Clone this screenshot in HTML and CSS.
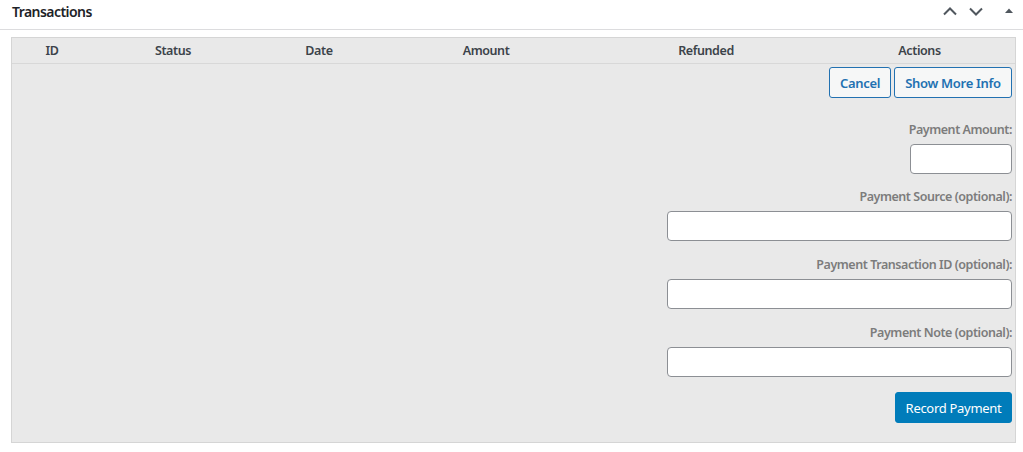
FILE: index.html
```html
<!DOCTYPE html>
<html>
<head>
<meta charset="utf-8">
<link rel="stylesheet" href="styles.css">
</head>
<body>
<div class="postbox">
  <div class="postbox-header">
    <h2 class="title">Transactions</h2>
    <div class="handles">
      <svg class="ico chev" width="16" height="10" viewBox="0 0 16 10"><path d="M2 8.5 L8 2.5 L14 8.5" fill="none" stroke="#50575e" stroke-width="2"/></svg>
      <svg class="ico chev" width="16" height="10" viewBox="0 0 16 10"><path d="M2 2.5 L8 8.5 L14 2.5" fill="none" stroke="#50575e" stroke-width="2"/></svg>
      <svg class="ico tri" width="10" height="10" viewBox="0 0 10 10"><path d="M1 7 L5 2.5 L9 7 Z" fill="#50575e"/></svg>
    </div>
  </div>
  <div class="inside">
    <div class="table">
      <div class="thead">
        <div class="th c1">ID</div>
        <div class="th c2">Status</div>
        <div class="th c3">Date</div>
        <div class="th c4">Amount</div>
        <div class="th c5">Refunded</div>
        <div class="th c6">Actions</div>
      </div>
      <div class="tbody">
        <div class="actions">
          <button class="btn">Cancel</button>
          <button class="btn">Show More Info</button>
        </div>
        <div class="field first">
          <label>Payment Amount:</label>
          <input type="text" class="input small">
        </div>
        <div class="field second">
          <label>Payment Source (optional):</label>
          <input type="text" class="input wide">
        </div>
        <div class="field">
          <label>Payment Transaction ID (optional):</label>
          <input type="text" class="input wide">
        </div>
        <div class="field">
          <label>Payment Note (optional):</label>
          <input type="text" class="input wide">
        </div>
        <button class="btn primary">Record Payment</button>
      </div>
    </div>
  </div>
</div>
</body>
</html>
```
FILE: styles.css
```css
* { box-sizing: border-box; }
body {
  margin: 0;
  background: #fff;
  font-family: "Noto Sans", "Open Sans", sans-serif;
  color: #1d2327;
}
.postbox-header {
  height: 30px;
  display: flex;
  align-items: center;
  justify-content: space-between;
  padding: 0 9px 7px 12px;
  border-bottom: 1px solid #dcdcde;
}
.title {
  margin: 0;
  font-size: 14px;
  font-weight: 600;
  color: #1d2327;
  letter-spacing: -0.55px;
}
.handles {
  display: flex;
  align-items: center;
  gap: 10px;
}
.ico { display: block; }
.tri { margin-left: 10px; }
.inside {
  padding: 7px 7px 0 11px;
}
.table {
  background: #e9e9e9;
  border: 1px solid #d5d5d5;
}
.thead {
  display: grid;
  grid-template-columns: 80px 162px 130px 204px 236px 1fr;
  height: 26px;
  align-items: center;
  border-bottom: 1px solid #d8d8d8;
}
.th {
  text-align: center;
  font-size: 12.5px;
  font-weight: 600;
  color: #3c434a;
  letter-spacing: -0.4px;
}
.tbody {
  display: flex;
  flex-direction: column;
  align-items: flex-end;
  padding: 3px 3px 19px 0;
}
.actions {
  display: flex;
  gap: 3px;
}
.btn {
  font-family: inherit;
  font-size: 13px;
  font-weight: 600;
  height: 31px;
  padding: 0 10px;
  border: 1px solid #2271b1;
  border-radius: 3px;
  background: #f6f7f7;
  color: #2271b1;
  letter-spacing: -0.3px;
}
.actions .btn:first-child { width: 62px; padding: 0; }
.actions .btn:last-child { width: 118px; padding: 0; }
.field {
  display: flex;
  flex-direction: column;
  align-items: flex-end;
  margin-top: 15px;
}
.field.first { margin-top: 23px; }
.field.second { margin-top: 14px; }
.field label {
  font-size: 12.5px;
  font-weight: 600;
  line-height: 18px;
  color: #7c7c7c;
  letter-spacing: -0.45px;
  margin-bottom: 5px;
}
.input {
  height: 30px;
  border: 1px solid #8c8f94;
  border-radius: 4px;
  background: #fff;
}
.small { width: 102px; }
.wide { width: 345px; }
.btn.primary {
  margin-top: 15px;
  width: 117px;
  padding: 0;
  background: #007cba;
  border-color: #007cba;
  color: #fff;
  font-weight: 400;
}
```
